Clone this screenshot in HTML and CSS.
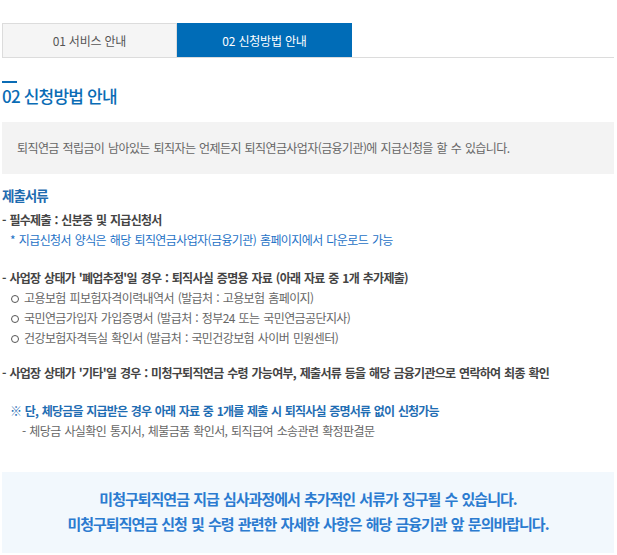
FILE: index.html
```html
<!DOCTYPE html>
<html lang="ko">
<head>
<meta charset="utf-8">
<link rel="stylesheet" href="styles.css">
</head>
<body>
<div class="page">
  <div class="tabs">
    <div class="tab">01 서비스 안내</div>
    <div class="tab active">02 신청방법 안내</div>
  </div>

  <h2 class="title">02 신청방법 안내</h2>

  <div class="notice">퇴직연금 적립금이 남아있는 퇴직자는 언제든지 퇴직연금사업자(금융기관)에 지급신청을 할 수 있습니다.</div>

  <h3 class="subtitle">제출서류</h3>

  <div class="group g1">
    <p class="strong">- 필수제출 : 신분증 및 지급신청서</p>
    <p class="blue indent">* 지급신청서 양식은 해당 퇴직연금사업자(금융기관) 홈페이지에서 다운로드 가능</p>
  </div>

  <div class="group g2">
    <p class="strong">- 사업장 상태가 '폐업추정'일 경우 : 퇴직사실 증명용 자료 (아래 자료 중 1개 추가제출)</p>
    <p class="circle">고용보험 피보험자격이력내역서 (발급처 : 고용보험 홈페이지)</p>
    <p class="circle">국민연금가입자 가입증명서 (발급처 : 정부24 또는 국민연금공단지사)</p>
    <p class="circle">건강보험자격득실 확인서 (발급처 : 국민건강보험 사이버 민원센터)</p>
  </div>

  <div class="group g3">
    <p class="strong">- 사업장 상태가 '기타'일 경우 : 미청구퇴직연금 수령 가능여부, 제출서류 등을 해당 금융기관으로 연락하여 최종 확인</p>
  </div>

  <div class="group g4">
    <p class="blue strongblue indent">※ 단, 체당금을 지급받은 경우 아래 자료 중 1개를 제출 시 퇴직사실 증명서류 없이 신청가능</p>
    <p class="gray indent2">- 체당금 사실확인 통지서, 체불금품 확인서, 퇴직급여 소송관련 확정판결문</p>
  </div>

  <div class="info">
    <p>미청구퇴직연금 지급 심사과정에서 추가적인 서류가 징구될 수 있습니다.</p>
    <p>미청구퇴직연금 신청 및 수령 관련한 자세한 사항은 해당 금융기관 앞 문의바랍니다.</p>
  </div>
</div>
</body>
</html>
```

FILE: styles.css
```css
* { box-sizing: border-box; }
html, body { margin: 0; padding: 0; background: #fff; }
body {
  font-family: "Noto Sans CJK KR", "Noto Sans", sans-serif;
  color: #555;
}
p { margin: 0; }
.page { padding: 23px 3px 0 2px; }

.tabs {
  display: flex;
  border-bottom: 1px solid #dcdcdc;
}
.tab {
  width: 175px;
  height: 34px;
  line-height: 33px;
  text-align: center;
  font-size: 12px;
  letter-spacing: -0.2px;
  color: #555;
  background: #f5f5f5;
  border: 1px solid #dcdcdc;
  border-bottom: 0;
}
.tab.active {
  background: #006cb7;
  color: #fff;
  border-color: #006cb7;
}

.title {
  margin: 23px 0 0;
  font-size: 17px;
  font-weight: 500;
  line-height: 23px;
  letter-spacing: -0.8px;
  color: #0a6cb5;
}
.title::before {
  content: "";
  display: block;
  width: 15px;
  height: 2px;
  background: #0a6cb5;
  margin-bottom: 1px;
}

.notice {
  margin-top: 15px;
  background: #f3f3f3;
  padding: 16px 15px;
  line-height: 20px;
  font-size: 12px;
  letter-spacing: -0.6px;
  word-spacing: 1px;
  color: #666;
}

.subtitle {
  margin: 9px 0 0;
  font-size: 13.5px;
  line-height: 24px;
  font-weight: 700;
  letter-spacing: -1px;
  color: #1f6cb0;
}

.group p {
  font-size: 12px;
  line-height: 20px;
  letter-spacing: -0.6px;
  word-spacing: 1px;
}
.g1 { margin-top: 3px; }
.g2 { margin-top: 18px; }
.g3 { margin-top: 15px; }
.g4 { margin-top: 18px; }

.group .strong { font-weight: 700; color: #444; letter-spacing: -0.7px; }
.blue { color: #1e72c6; }
.group .strongblue { font-weight: 700; color: #1f6db3; letter-spacing: -0.8px; }
.gray { color: #666; }
.indent { padding-left: 8px; }
.indent2 { padding-left: 20px; }

.circle {
  position: relative;
  padding-left: 22px;
  color: #666;
}
.circle::before {
  content: "";
  position: absolute;
  left: 9px;
  top: 7px;
  width: 6px;
  height: 6px;
  border: 1px solid #555;
  border-radius: 50%;
}

.info {
  margin-top: 31px;
  background: #f2f8fd;
  padding: 14px 0 17px;
  text-align: center;
}
.info p {
  font-size: 15px;
  line-height: 25px;
  font-weight: 700;
  letter-spacing: -1px;
  word-spacing: 1px;
  color: #2b7bd0;
}
```
